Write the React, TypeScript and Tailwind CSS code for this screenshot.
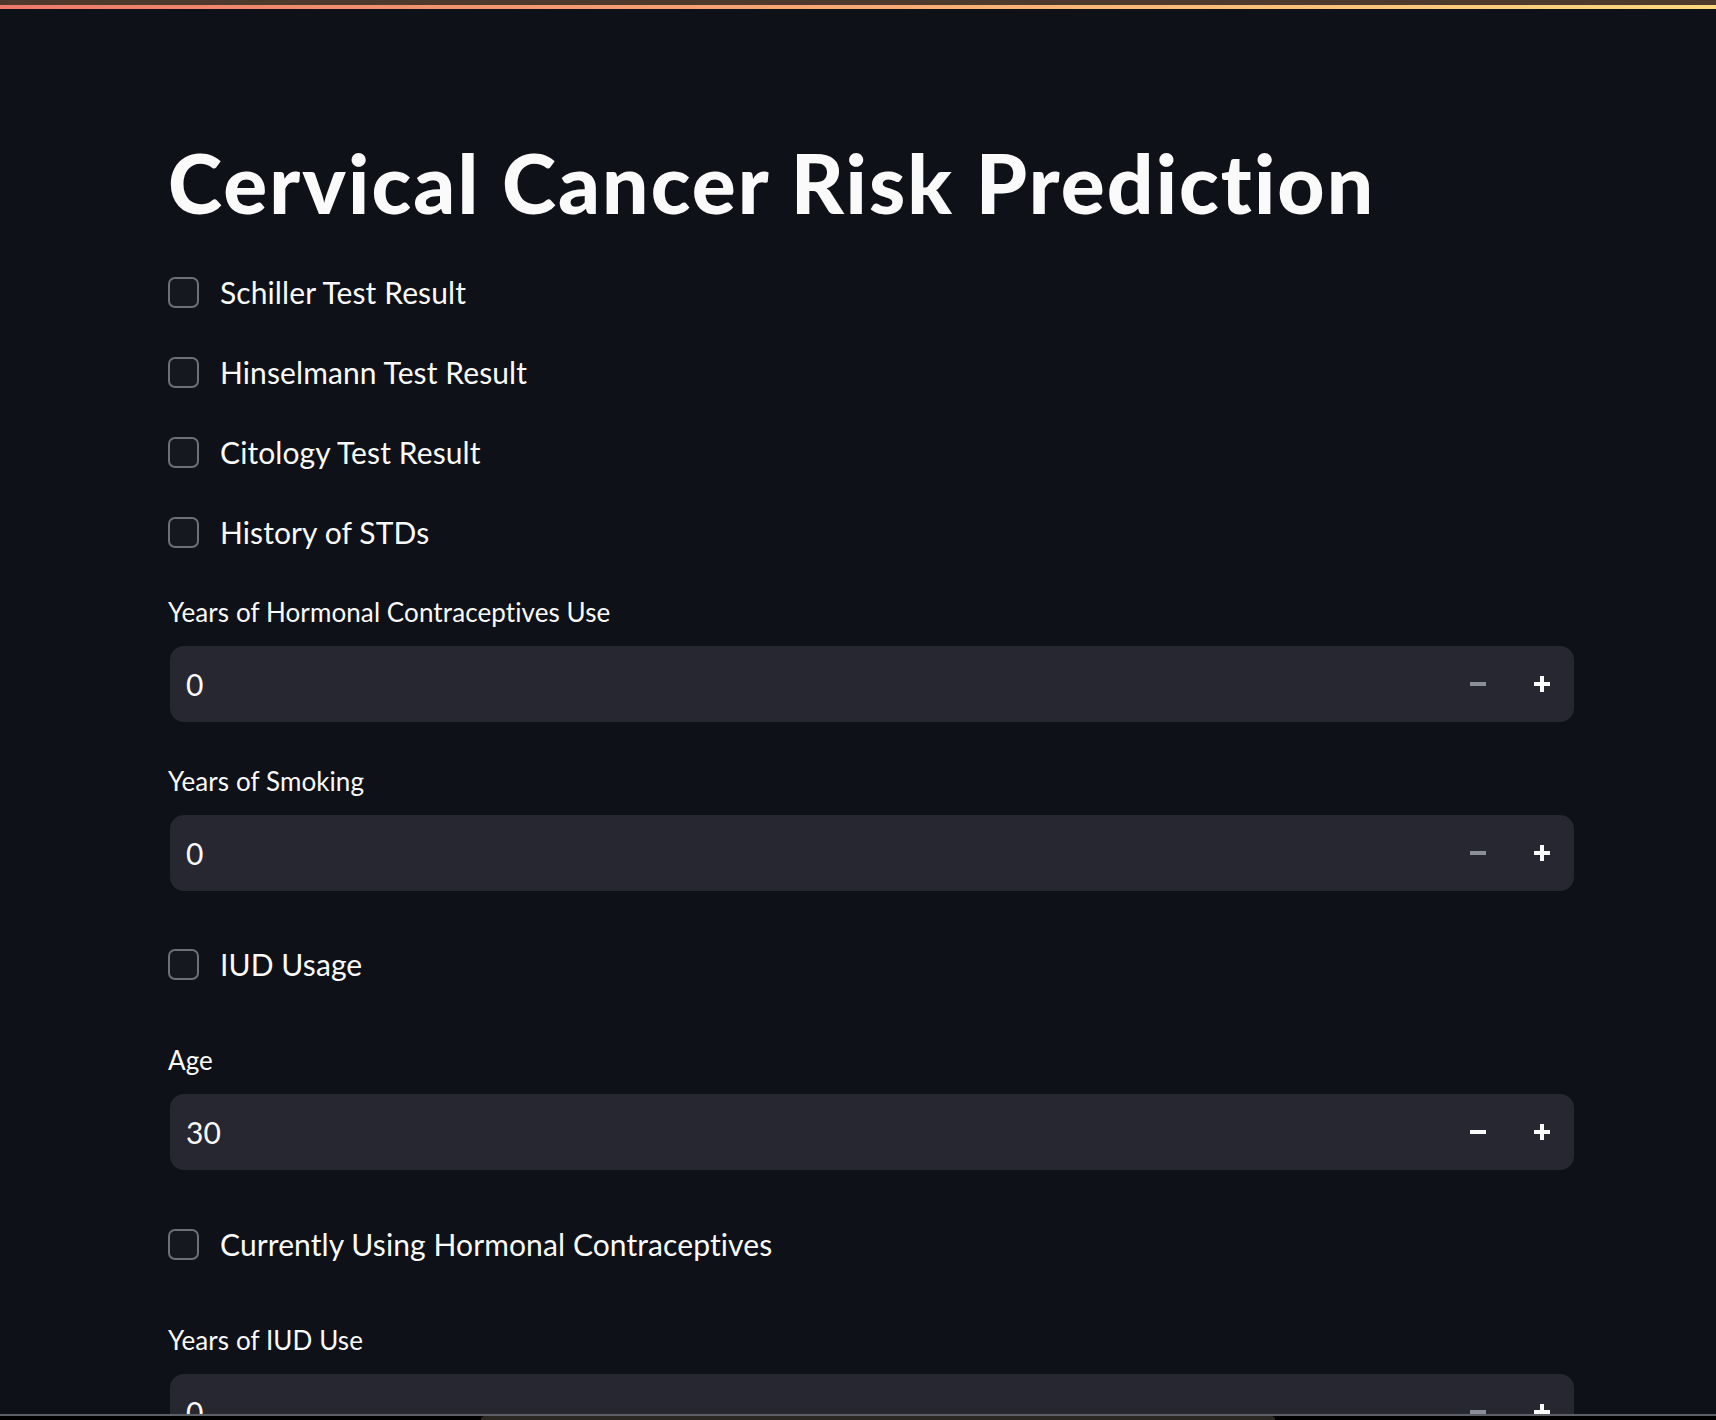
import React from "react";

function CheckRow({ label, className }: { label: string; className: string }) {
  return (
    <div className={"flex items-center h-[80px] " + className}>
      <div className="w-[31px] h-[31px] rounded-[7px] border-2 border-[#6e7077] bg-[#161820] shrink-0" />
      <span className="ml-[21px] text-[30px] leading-[36px] tracking-[0.1px] whitespace-nowrap">{label}</span>
    </div>
  );
}

function Minus({ color }: { color: string }) {
  return (
    <svg width="16" height="16" viewBox="0 0 16 16" className="block">
      <rect x="0" y="6" width="16" height="4" fill={color} />
    </svg>
  );
}

function Plus() {
  return (
    <svg width="16" height="16" viewBox="0 0 16 16" className="block">
      <rect x="0" y="6" width="16" height="4" fill="#fafafa" />
      <rect x="6" y="0" width="4" height="16" fill="#fafafa" />
    </svg>
  );
}

function NumInput({
  label,
  value,
  minusActive,
  className,
}: {
  label: string;
  value: string;
  minusActive: boolean;
  className: string;
}) {
  return (
    <div className={className}>
      <div className="h-[36px] text-[26px] leading-[36px] tracking-[0.1px] whitespace-nowrap">{label}</div>
      <div className="mt-[16px] mx-[2px] h-[76px] rounded-[14px] bg-[#262730] flex items-center pl-[16px] pr-[24px]">
        <span className="flex-1 text-[30px] leading-[36px]">{value}</span>
        <Minus color={minusActive ? "#fafafa" : "#8b8d98"} />
        <div className="w-[48px]" />
        <Plus />
      </div>
    </div>
  );
}

export default function App() {
  return (
    <div className="relative h-[1420px] overflow-hidden bg-[#0e1117] text-[#fafafa] font-[family-name:Lato,sans-serif]">
      <div className="h-[5px] bg-[#4e3a2c]" />
      <div className="h-[4px] bg-gradient-to-r from-[#ee7a6a] to-[#fbd77d]" />
      <div className="ml-[168px] w-[1408px]">
        <h1 className="mt-[124px] text-[82px] leading-[98px] font-black tracking-[2.1px] [font-variant-ligatures:none] whitespace-nowrap">
          Cervical Cancer Risk Prediction
        </h1>
        <CheckRow label="Schiller Test Result" className="mt-[21px]" />
        <CheckRow label="Hinselmann Test Result" className="mt-0" />
        <CheckRow label="Citology Test Result" className="mt-0" />
        <CheckRow label="History of STDs" className="mt-0" />
        <NumInput label="Years of Hormonal Contraceptives Use" value="0" minusActive={false} className="mt-[22px]" />
        <NumInput label="Years of Smoking" value="0" minusActive={false} className="mt-[41px]" />
        <CheckRow label="IUD Usage" className="mt-[33px]" />
        <NumInput label="Age" value="30" minusActive={true} className="mt-[38px]" />
        <CheckRow label="Currently Using Hormonal Contraceptives" className="mt-[34px]" />
        <NumInput label="Years of IUD Use" value="0" minusActive={false} className="mt-[38px]" />
      </div>
      <div className="absolute left-0 right-0 top-[1414px] h-[2px] bg-[#5d6066]" />
      <div className="absolute left-0 right-0 top-[1416px] h-[4px] bg-black">
        <div className="absolute left-[481px] w-[794px] top-0 h-[4px] rounded-t-[4px] bg-[#2b2824]" />
      </div>
    </div>
  );
}
